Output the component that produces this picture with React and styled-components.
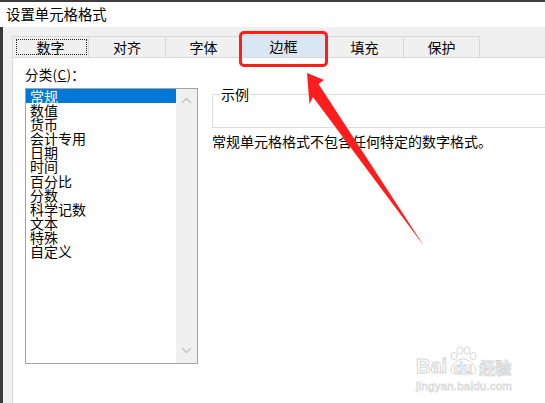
import React from "react";
import styled, { createGlobalStyle } from "styled-components";

const Global = createGlobalStyle`
  html, body { margin: 0; padding: 0; background: #fff; overflow: hidden; }
  body { font-family: "Noto Sans CJK SC", "Noto Sans", sans-serif; color: #000; }
`;

const Window = styled.div`
  position: relative;
  width: 545px;
  height: 403px;
  display: flex;
  flex-direction: column;
  border-top: 2px solid #3d3d3d;
  box-sizing: border-box;
  overflow: hidden;
  background: #fff;
`;

const TitleBar = styled.div`
  height: 25px;
  flex: none;
  display: flex;
  align-items: center;
  padding: 0 0 2px 6px;
  box-sizing: border-box;
  font-size: 14.4px;
  line-height: 16px;
  background: #fff;
`;

const Body = styled.div`
  flex: 1;
  display: flex;
  flex-direction: column;
  background: #f0f0f0;
  border-left: 3px solid #3a3a3a;
  padding: 9px 0 0 9px;
  min-height: 0;
`;

const TabStrip = styled.div`
  display: flex;
  align-items: flex-end;
  height: 21px;
  flex: none;
`;

const Tab = styled.div`
  box-sizing: border-box;
  width: ${(p) => p.$w}px;
  height: ${(p) => (p.$active ? 22 : 21)}px;
  margin-left: -1px;
  display: flex;
  align-items: center;
  justify-content: center;
  border: 1px solid #d9d9d9;
  border-bottom: none;
  background: ${(p) => (p.$active ? "#d9e7f4" : "#f0f0f0")};
  font-size: 14px;
  line-height: 15px;
  position: relative;
  &:first-child { margin-left: 0; }
`;

const FocusRing = styled.span`
  position: absolute;
  left: 3px;
  right: 1px;
  top: 2px;
  bottom: 2px;
  border: 1px dotted #222;
`;

const Panel = styled.div`
  flex: 1;
  display: flex;
  background: #fff;
  border-top: 1px solid #d9d9d9;
  border-left: 1px solid #d9d9d9;
  padding: 7px 0 0 12px;
  min-height: 0;
  overflow: hidden;
`;

const LeftCol = styled.div`
  width: 173px;
  flex: none;
  display: flex;
  flex-direction: column;
`;

const Label = styled.div`
  font-size: 13.5px;
  line-height: 16px;
  height: 23px;
  padding-top: 1px;
  box-sizing: border-box;
  letter-spacing: 0.3px;
`;

const ListBox = styled.div`
  box-sizing: border-box;
  width: 173px;
  height: 276px;
  border: 1px solid #a3a3a3;
  display: flex;
`;

const Items = styled.div`
  flex: 1;
`;

const Item = styled.div`
  height: 14.1px;
  line-height: 14px;
  font-size: 14px;
  padding-left: 4px;
  background: ${(p) => (p.$sel ? "#0078d7" : "transparent")};
  color: ${(p) => (p.$sel ? "#fff" : "#000")};
  white-space: nowrap;
`;

const ScrollBar = styled.div`
  width: 21px;
  flex: none;
  background: #f0f0f0;
  display: flex;
  flex-direction: column;
  justify-content: space-between;
  align-items: center;
  padding: 8px 0 9px;
  box-sizing: border-box;
`;

const RightCol = styled.div`
  flex: none;
  width: 370px;
  margin-left: 14px;
  padding-top: 22px;
  display: flex;
  flex-direction: column;
`;

const GroupBox = styled.fieldset`
  margin: 0;
  padding: 0;
  border: 1px solid #dcdcdc;
  min-width: 0;
`;

const Legend = styled.legend`
  padding: 0 1px;
  margin-left: 7px;
  font-size: 14px;
  line-height: 14px;
`;

const GroupInner = styled.div`
  height: 26px;
`;

const Description = styled.div`
  margin-top: 5px;
  font-size: 14px;
  line-height: 16px;
  white-space: nowrap;
`;

const Highlight = styled.div`
  position: absolute;
  left: 239px;
  top: 29px;
  width: 89px;
  height: 36px;
  box-sizing: border-box;
  border: 3px solid #ff1c1c;
  border-radius: 5px;
`;

const Overlay = styled.svg`
  position: absolute;
  left: 0;
  top: 0;
  pointer-events: none;
`;

const Watermark = styled.div`
  position: absolute;
  left: 416px;
  top: 344px;
  display: flex;
  flex-direction: column;
  font-family: "Liberation Sans", Arial, sans-serif;
`;

const WmRow = styled.div`
  display: flex;
  align-items: flex-end;
  height: 30px;
`;

const WmBig = styled.span`
  font-size: 20px;
  line-height: 20px;
  font-weight: bold;
  color: #fff;
  -webkit-text-stroke: 1px #d6d6d6;
`;

const WmPaw = styled.span`
  position: relative;
  width: 32px;
  height: 30px;
  display: flex;
  align-items: flex-end;
  justify-content: center;
`;

const WmDu = styled.span`
  font-size: 15px;
  line-height: 16px;
  font-weight: bold;
  color: #fff;
  -webkit-text-stroke: 1px #d6d6d6;
  position: relative;
`;

const WmCn = styled.span`
  font-family: "Noto Sans CJK SC", sans-serif;
  font-size: 16px;
  line-height: 18px;
  font-weight: bold;
  color: #fff;
  -webkit-text-stroke: 1px #d6d6d6;
`;

const WmSmall = styled.span`
  font-size: 11.5px;
  line-height: 14px;
  margin-top: 3px;
  color: #fff;
  -webkit-text-stroke: 0.8px #dcdcdc;
  letter-spacing: 0.2px;
`;

const tabs = [
  { t: "数字", w: 77, focus: true },
  { t: "对齐", w: 78 },
  { t: "字体", w: 77 },
  { t: "边框", w: 85, active: true },
  { t: "填充", w: 79 },
  { t: "保护", w: 77 },
];

const items = [
  "常规", "数值", "货币", "会计专用", "日期", "时间",
  "百分比", "分数", "科学记数", "文本", "特殊", "自定义",
];

const Chevron = ({ up }) => (
  <svg width="11" height="7" viewBox="0 0 11 7">
    <path
      d={up ? "M1 6 L5.5 1.5 L10 6" : "M1 1 L5.5 5.5 L10 1"}
      fill="none"
      stroke="#c2c2c2"
      strokeWidth="1.3"
    />
  </svg>
);

export default function App() {
  return (
    <>
      <Global />
      <Window>
        <TitleBar>设置单元格格式</TitleBar>
        <Body>
          <TabStrip>
            {tabs.map((tb) => (
              <Tab key={tb.t} $w={tb.w} $active={tb.active}>
                {tb.focus && <FocusRing />}
                {tb.t}
              </Tab>
            ))}
          </TabStrip>
          <Panel>
            <LeftCol>
              <Label>
                分类(<u>C</u>)：
              </Label>
              <ListBox>
                <Items>
                  {items.map((it, i) => (
                    <Item key={it} $sel={i === 0}>
                      {it}
                    </Item>
                  ))}
                </Items>
                <ScrollBar>
                  <Chevron up />
                  <Chevron />
                </ScrollBar>
              </ListBox>
            </LeftCol>
            <RightCol>
              <GroupBox>
                <Legend>示例</Legend>
                <GroupInner />
              </GroupBox>
              <Description>常规单元格格式不包含任何特定的数字格式。</Description>
            </RightCol>
          </Panel>
        </Body>
        <Highlight />
        <Overlay width="545" height="403" viewBox="0 0 545 403">
          <polygon
            points="307,71 324,78 318.5,82 424,244 313,95 309.5,102"
            fill="#ff1c1c"
          />
        </Overlay>
        <Watermark>
          <WmRow>
            <WmBig>Bai</WmBig>
            <WmPaw>
              <svg
                width="32"
                height="30"
                viewBox="0 0 32 30"
                style={{ position: "absolute", left: 0, top: 0 }}
              >
                <g fill="#fff" stroke="#d6d6d6" strokeWidth="1">
                  <ellipse cx="7" cy="10" rx="3" ry="3.5" />
                  <ellipse cx="13" cy="4.5" rx="3" ry="3.5" />
                  <ellipse cx="20" cy="4.5" rx="3" ry="3.5" />
                  <ellipse cx="26" cy="10" rx="3" ry="3.5" />
                  <path d="M4 26 C4 18 11 13 16 13 C21 13 29 18 29 26 C29 29 4 29 4 26 Z" />
                </g>
              </svg>
              <WmDu>du</WmDu>
            </WmPaw>
            <WmCn>经验</WmCn>
          </WmRow>
          <WmSmall>jingyan.baidu.com</WmSmall>
        </Watermark>
      </Window>
    </>
  );
}
